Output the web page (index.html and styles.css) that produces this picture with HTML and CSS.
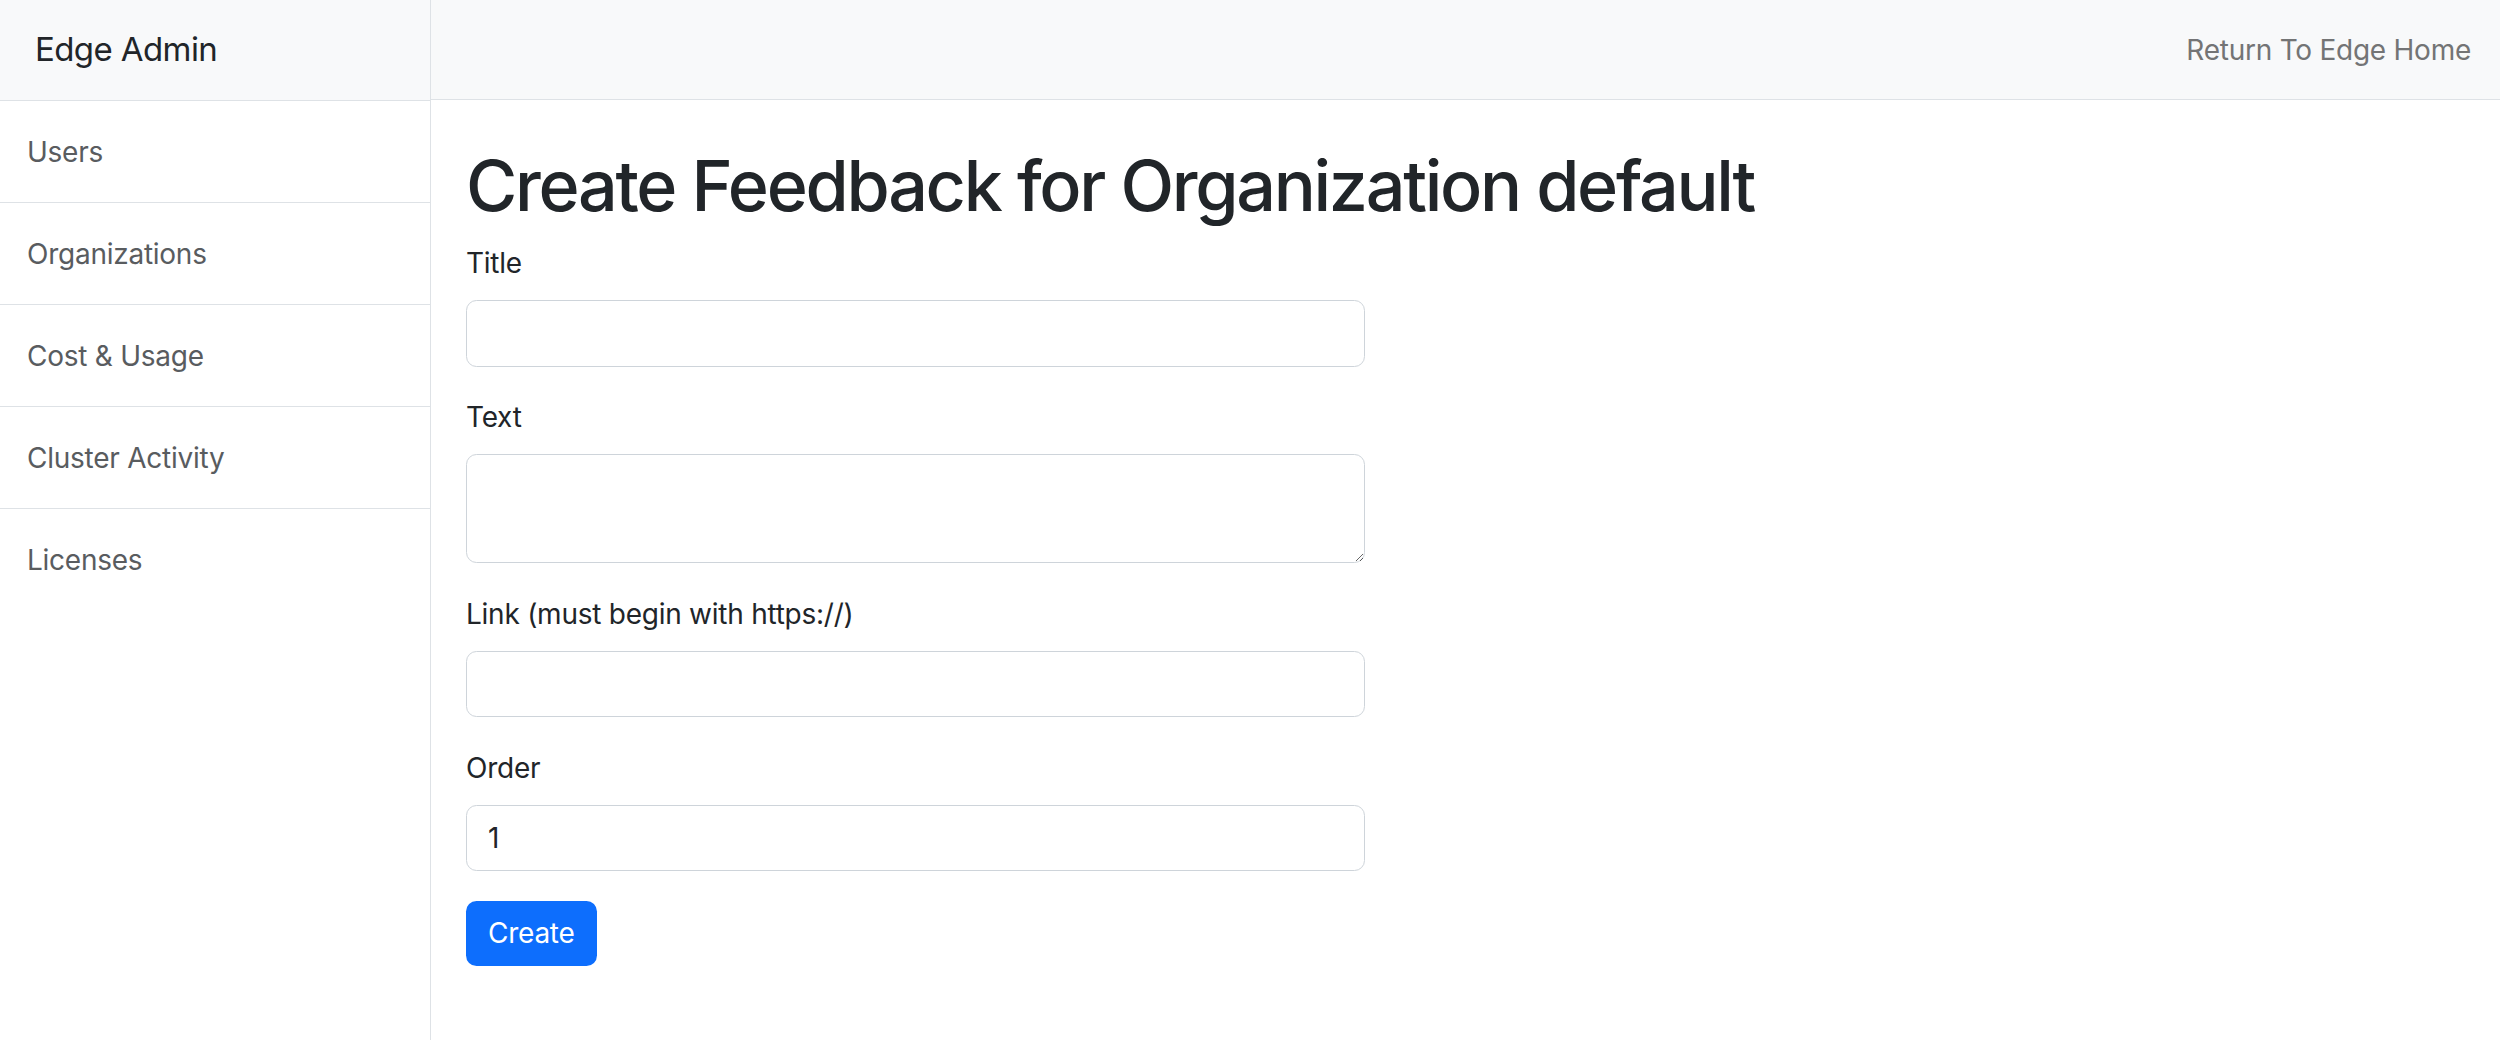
FILE: index.html
```html
<!DOCTYPE html>
<html lang="en">
<head>
  <meta charset="UTF-8" />
  <meta name="viewport" content="width=device-width, initial-scale=1.0" />
  <title>Edge Admin</title>
  <link rel="stylesheet" href="styles.css">
</head>
<body>
  <div class="layout">
    <aside class="sidebar">
      <div class="sidebar-brand">Edge Admin</div>
      <nav class="sidebar-list">
        <a href="#" class="sidebar-item">Users</a>
        <a href="#" class="sidebar-item">Organizations</a>
        <a href="#" class="sidebar-item">Cost &amp; Usage</a>
        <a href="#" class="sidebar-item">Cluster Activity</a>
        <a href="#" class="sidebar-item">Licenses</a>
      </nav>
    </aside>

    <div class="main">
      <header class="topbar">
        <a href="#" class="topbar-link">Return To Edge Home</a>
      </header>

      <div class="content">
        <h1>Create Feedback for Organization default</h1>
        <form class="feedback-form" onsubmit="return false;">
          <div class="field">
            <label for="title">Title</label>
            <input id="title" class="control" type="text" />
          </div>
          <div class="field">
            <label for="text">Text</label>
            <textarea id="text" class="control" rows="2"></textarea>
          </div>
          <div class="field">
            <label for="link">Link (must begin with https://)</label>
            <input id="link" class="control" type="text" />
          </div>
          <div class="field">
            <label for="order">Order</label>
            <input id="order" class="control" type="number" value="1" />
          </div>
          <button type="submit" class="btn-primary">Create</button>
        </form>
      </div>
    </div>
  </div>
</body>
</html>
```

FILE: styles.css
```css
* {
  box-sizing: border-box;
}

html, body {
  height: 100%;
}

body {
  margin: 0;
  font-family: 'Inter', 'Liberation Sans', sans-serif;
  font-size: 28px;
  line-height: 1.5;
  letter-spacing: -0.25px;
  color: #212529;
  background: #fff;
}

a {
  text-decoration: none;
}

.layout {
  display: flex;
  height: 100%;
}

.sidebar {
  width: 431px;
  flex-shrink: 0;
  border-right: 1px solid #dee2e6;
}

.sidebar-brand {
  height: 101px;
  padding: 0 35px;
  display: flex;
  align-items: center;
  font-size: 33px;
  letter-spacing: -0.6px;
  color: #212529;
  background: #f8f9fa;
  border-bottom: 1px solid #dee2e6;
}

.sidebar-list {
  display: flex;
  flex-direction: column;
}

.sidebar-item {
  display: block;
  padding: 29.5px 27px;
  line-height: 42px;
  color: #595c5f;
  border-bottom: 1px solid #dee2e6;
}

.sidebar-item:last-child {
  border-bottom: none;
}

.main {
  flex: 1;
  display: flex;
  flex-direction: column;
}

.topbar {
  height: 100px;
  padding: 0 29px;
  display: flex;
  align-items: center;
  justify-content: flex-end;
  background: #f8f9fa;
  border-bottom: 1px solid #dee2e6;
}

.topbar-link {
  color: #737475;
  font-size: 28px;
}

.content {
  padding: 44px 35px;
}

h1 {
  margin: 0 0 14px;
  font-size: 70px;
  font-weight: 500;
  line-height: 1.2;
  letter-spacing: -2.3px;
}

.feedback-form {
  width: 899px;
}

.field {
  margin-bottom: 29.5px;
}

label {
  display: block;
  line-height: 42px;
  margin-bottom: 16px;
}

.control {
  display: block;
  width: 100%;
  height: 66.5px;
  padding: 10.5px 21px;
  font-family: inherit;
  font-size: 28px;
  line-height: 42px;
  color: #212529;
  background: #fff;
  border: 1px solid #ced4da;
  border-radius: 10.5px;
  outline: none;
}

textarea.control {
  height: 109px;
  resize: vertical;
}

input[type=number]::-webkit-inner-spin-button,
input[type=number]::-webkit-outer-spin-button {
  -webkit-appearance: none;
  margin: 0;
}

.btn-primary {
  height: 65.5px;
  padding: 0 22px;
  font-family: inherit;
  font-size: 28px;
  letter-spacing: -0.25px;
  color: #fff;
  background: #0d6efd;
  border: none;
  border-radius: 10.5px;
  cursor: pointer;
}
```
